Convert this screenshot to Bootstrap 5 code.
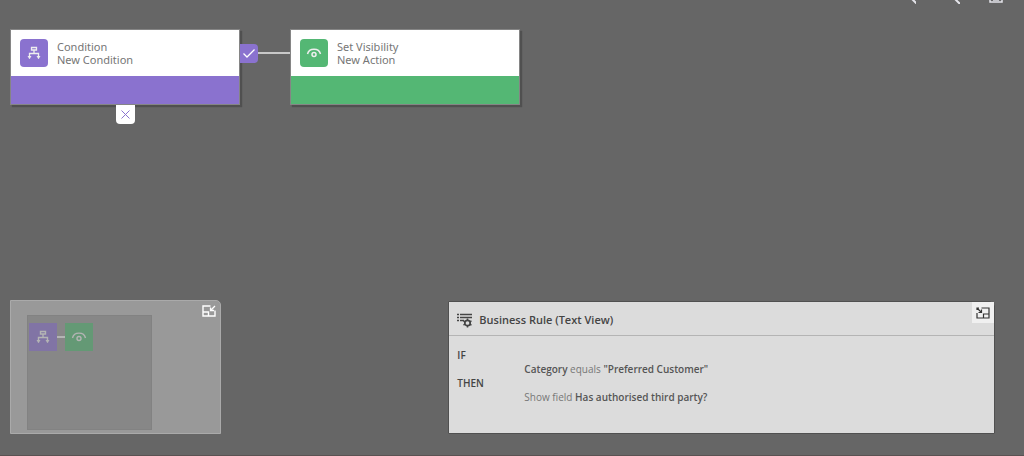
<!DOCTYPE html>
<html lang="en">
<head>
<meta charset="utf-8">
<meta name="viewport" content="width=device-width, initial-scale=1">
<title>Business rule designer</title>
<link href="https://cdn.jsdelivr.net/npm/bootstrap@5.3.0/dist/css/bootstrap.min.css" rel="stylesheet">
<style>
  body { background: #666; color: #767676; font-family: "Open Sans", "Noto Sans", sans-serif; font-size: 11px; line-height: 14px; }
  svg { display: block; fill: none; stroke: currentColor; }
  .designer { border-bottom: 1px solid #5a5252; padding: 0 29px 21px 10px; }
  .tools { height: 29px; gap: 28px; margin-right: -9px; }
  .tools .btn { color: #e4e4ea; }
  .flow-node { width: 230px; border: 1px solid #858585; box-shadow: 2px 2px 1px #505050; }
  .flow-head { height: 46px; padding: 0 9px; gap: 9px; font-family: "Noto Sans", "Open Sans", sans-serif; font-size: 11px; line-height: 13px; }
  .flow-foot { height: 28px; }
  .tile { width: 28px; height: 28px; border-radius: 4px; color: #eee; }
  .purple { background: #8a72cf; }
  .green { background: #54b774; }
  .yes-tag { width: 18px; height: 19px; margin-top: 15px; border-radius: 0 4px 4px 0; color: #fff; }
  .no-tag { width: 19px; height: 19px; border-radius: 0 0 4px 4px; color: #8a72cf; }
  .link-line { width: 32px; height: 2px; margin-top: 23px; background: #c8c8c8; }
  .minimap { width: 211px; height: 134px; background: #999; border: 1px solid #aaa; border-radius: 0 5px 0 0; padding: 0 4px 0 16px; }
  .viewport { width: 125px; height: 115px; margin-top: 14px; background: #878787; border: 1px solid #828282; padding: 7px 1px; }
  .mini-tile { width: 28px; height: 28px; color: #b4b4b4; }
  .mini-purple { background: #8174a5; }
  .mini-green { background: #649975; }
  .mini-line { width: 8px; height: 2px; margin-top: 13px; background: #b4b4b4; }
  .rule-panel { width: 55.5%; height: 133px; background: #dcdcdc; border: 1px solid #505050; border-radius: 0 5px 0 0; }
  .rule-head { height: 34px; border-bottom: 1px solid #b4b4b4; padding-left: 8px; gap: 6px; color: #444; }
  .rule-head h1 { font-size: 11px; line-height: 20px; font-weight: 600; }
  .collapse-btn { width: 22px; height: 21px; background: #f0f0f0; color: #333; }
  .rule-text { padding: 12px 8px; grid-template-columns: 67px 1fr; grid-auto-rows: 14px; }
  .rule-text dt { color: #444; font-weight: 600; font-size: 10px; grid-column: 1; }
  .rule-text dd { grid-column: 2; font-size: 10px; color: #777; }
  .rule-text b { color: #555; font-weight: 600; }
  .line-2 { grid-row: 2; }
  .line-3 { grid-row: 3; }
  .line-4 { grid-row: 4; }
</style>
</head>
<body>
<svg class="d-none" aria-hidden="true">
  <symbol id="branch" viewBox="0 0 14 14"><path d="M4.500 1.500h5v2.500h-5zM7 4v3.500M2.500 12.500V7.500h9V12.500"/><path d="M.5 10h4l-2 3zM9.500 10h4l-2 3z" fill="currentColor" stroke="none"/></symbol>
  <symbol id="eye" viewBox="0 0 16 12"><path d="M1.500 7C3 .5 13 .5 14.500 7"/><circle cx="8" cy="7.500" r="2"/></symbol>
</svg>
<main class="designer d-flex flex-column min-vh-100">
  <div class="tools d-flex justify-content-end align-items-start">
    <button class="btn p-0 border-0" aria-label="Zoom in"><svg width="16" height="4"><path d="M11 -2l6 6" stroke-width="2"/></svg></button>
    <button class="btn p-0 border-0" aria-label="Zoom out"><svg width="16" height="4"><path d="M10 -2l6 6" stroke-width="2"/></svg></button>
    <button class="btn p-0 border-0" aria-label="Fit to canvas"><svg width="16" height="4"><path d="M2 -1v3h12v-3M5 0h6" stroke-width="1.500"/></svg></button>
  </div>
  <section class="d-flex align-items-start">
    <div class="d-flex flex-column align-items-center">
      <article class="flow-node">
        <div class="flow-head bg-white d-flex align-items-center">
          <span class="tile purple d-flex align-items-center justify-content-center"><svg width="14" height="14" stroke-width="1.300"><use href="#branch"/></svg></span>
          <div><div>Condition</div><div>New Condition</div></div>
        </div>
        <div class="flow-foot purple"></div>
      </article>
      <span class="no-tag bg-white d-flex align-items-center justify-content-center"><svg width="9" height="9"><path d="M.5 .5l8 8M8.500 .5l-8 8"/></svg></span>
    </div>
    <span class="yes-tag purple d-flex align-items-center justify-content-center"><svg width="12" height="9"><path d="M.5 4.500l3.500 3.500L11.500 .5" stroke-width="1.300"/></svg></span>
    <span class="link-line"></span>
    <article class="flow-node">
      <div class="flow-head bg-white d-flex align-items-center">
        <span class="tile green d-flex align-items-center justify-content-center"><svg width="16" height="12" stroke-width="1.500"><use href="#eye"/></svg></span>
        <div><div>Set Visibility</div><div>New Action</div></div>
      </div>
      <div class="flow-foot green"></div>
    </article>
  </section>
  <section class="d-flex justify-content-between align-items-end mt-auto">
    <div class="minimap d-flex justify-content-between">
      <div class="viewport d-flex align-items-start">
        <span class="mini-tile mini-purple d-flex align-items-center justify-content-center"><svg width="14" height="14" stroke-width="1.400"><use href="#branch"/></svg></span>
        <span class="mini-line"></span>
        <span class="mini-tile mini-green d-flex align-items-center justify-content-center"><svg width="16" height="12" stroke-width="1.400"><use href="#eye"/></svg></span>
      </div>
      <button class="btn p-0 pt-1 border-0 align-self-start text-white" aria-label="Collapse minimap"><svg width="14" height="12"><path d="M8.500 1H1v10h12V5.500M1 7h5.500v4" stroke-width="1.400"/><path d="M8.500 5.500l4.500-4.500M8.500 2.500v3h3.500" stroke-width="1.300"/></svg></button>
    </div>
    <section class="rule-panel">
      <div class="rule-head d-flex align-items-start">
        <svg class="mt-2 flex-shrink-0" width="16" height="18" aria-hidden="true"><path d="M0 4.500h2M3 4.500h12M0 7.500h2M3 7.500h12M0 10.500h2M3 10.500h4" stroke-width="1.500"/><circle cx="10.500" cy="13" r="2.700" stroke-width="1.700"/><path d="M10.500 8.500v2M10.500 15.500v2M6.500 11l1.500.8M13 14.300l1.500.8M6.500 15l1.500-.8M13 11.700l1.500-.8" stroke-width="1.500"/></svg>
        <h1 class="m-0 mt-2">Business Rule (Text View)</h1>
        <button class="collapse-btn btn border-0 rounded-0 p-0 ms-auto d-flex align-items-center justify-content-center" aria-label="Collapse text view"><svg width="14" height="12"><path d="M5.500 1H13v10H1V6M13 7H7.500v4" stroke-width="1.200"/><path d="M1 1l4.500 4.500M5.500 2.500v3h-3M1 3V1h2" stroke-width="1.200"/></svg></button>
      </div>
      <dl class="rule-text d-grid m-0">
        <dt>IF</dt>
        <dd class="line-2 m-0"><b>Category</b> equals <b>"Preferred Customer"</b></dd>
        <dt class="line-3">THEN</dt>
        <dd class="line-4 m-0">Show field <b>Has authorised third party?</b></dd>
      </dl>
    </section>
  </section>
</main>
<script src="https://cdn.jsdelivr.net/npm/bootstrap@5.3.0/dist/js/bootstrap.bundle.min.js"></script>
</body>
</html>
